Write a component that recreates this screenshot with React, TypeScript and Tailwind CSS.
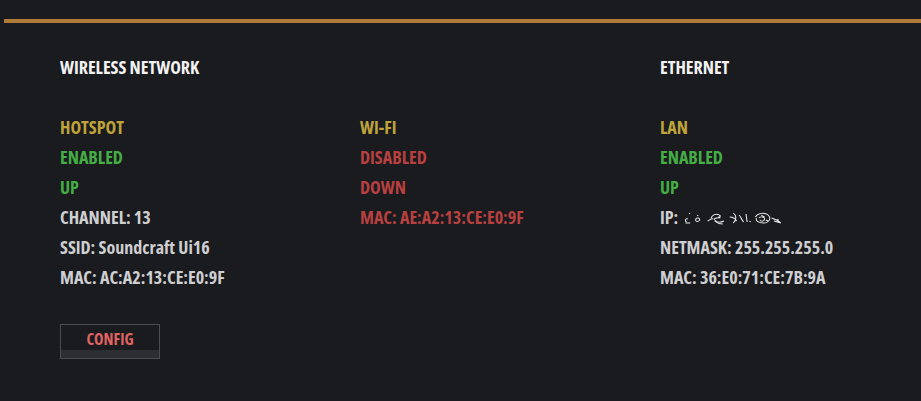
import React from "react";

type Line = { text: string; color: string };

const Y = "text-[#bfa43a]";
const G = "text-[#44ad44]";
const R = "text-[#b8403f]";
const W = "text-[#cfcfd1]";

const columns: { title?: string; lines: Line[] }[] = [
    {
        title: "WIRELESS NETWORK",
        lines: [
            { text: "HOTSPOT", color: Y },
            { text: "ENABLED", color: G },
            { text: "UP", color: G },
            { text: "CHANNEL: 13", color: W },
            { text: "SSID: Soundcraft Ui16", color: W },
            { text: "MAC: AC:A2:13:CE:E0:9F", color: W },
        ],
    },
    {
        lines: [
            { text: "WI-FI", color: Y },
            { text: "DISABLED", color: R },
            { text: "DOWN", color: R },
            { text: "MAC: AE:A2:13:CE:E0:9F", color: R },
        ],
    },
    {
        title: "ETHERNET",
        lines: [
            { text: "LAN", color: Y },
            { text: "ENABLED", color: G },
            { text: "UP", color: G },
            { text: "IP:", color: W },
            { text: "NETMASK: 255.255.255.0", color: W },
            { text: "MAC: 36:E0:71:CE:7B:9A", color: W },
        ],
    },
];

// blurred / scrambled ip address
function Scribble() {
    return (
        <svg width="128" height="16" viewBox="0 0 110 16" preserveAspectRatio="none" className="ml-[4px]" fill="none" stroke="#ececec" strokeWidth="0.9">
            <path d="M4 13 c-2 -1 -1 -4 1 -3 M3 14 l4 0 M6 4 l1 1" />
            <path d="M12 12 c-1 -3 2 -4 3 -2 c1 2 -2 3 -3 2 M13 7 l1 -1" />
            <path d="M22 12 c2 -1 3 -3 5 -2 M25 9 c1 -3 4 -5 7 -3 c2 1 0 3 -2 3 c-2 0 -3 1 -1 3 c2 2 5 1 7 0 M28 12 c2 2 4 3 7 3 M31 8 l2 1 M34 13 l2 -1" />
            <path d="M44 4 c3 2 3 7 0 10 M41 8 c3 0 5 2 6 4 M49 6 c2 2 2 5 4 7" />
            <path d="M55 5 l1 8 M58 12 l1 1" />
            <path d="M63 8 c2 -4 8 -5 11 -2 c3 3 1 8 -4 8 c-4 0 -7 -2 -6 -5 M66 9 c2 -2 5 -1 5 1 c0 2 -3 3 -4 1 M68 6 l3 2 M72 11 l2 1" />
            <path d="M77 9 c3 1 6 3 8 5 M79 12 l6 2 M82 10 l1 1" />
        </svg>
    );
}

export default function App() {
    return (
        <div
            className="w-[921px] h-[401px] bg-[#1a1b1f] overflow-hidden font-bold font-stretch-condensed text-[18px] leading-[30px]"
            style={{ fontFamily: '"Open Sans", "Liberation Sans", sans-serif' }}>
            <div className="pt-[19px] pl-[4px]">
                <div className="h-[4px] bg-[#b07a3a]" />
            </div>
            <div className="grid grid-cols-[300px_300px_300px] pl-[60px] pt-[29px]">
                {columns.map((col, i) => (
                    <div key={i} className="flex flex-col">
                        <div className="h-[30px] text-[#f2f2f2]">{col.title ?? ""}</div>
                        <div className="h-[30px]" />
                        {col.lines.map((l, j) => (
                            <div key={j} className={"h-[30px] flex items-center " + l.color}>
                                <span>{l.text}</span>
                                {l.text === "IP:" && <Scribble />}
                            </div>
                        ))}
                    </div>
                ))}
            </div>
            <div className="pl-[60px] pt-[32px]">
                <button className="w-[100px] h-[35px] border border-[#4b4c50] bg-[#1a1b1f] flex flex-col">
                    <span className="flex-1 flex items-center justify-center text-[#e06462] text-[16px] leading-none pt-[2px]">
                        CONFIG
                    </span>
                    <span className="h-[8px] w-full bg-[#2d2e32]" />
                </button>
            </div>
        </div>
    );
}
